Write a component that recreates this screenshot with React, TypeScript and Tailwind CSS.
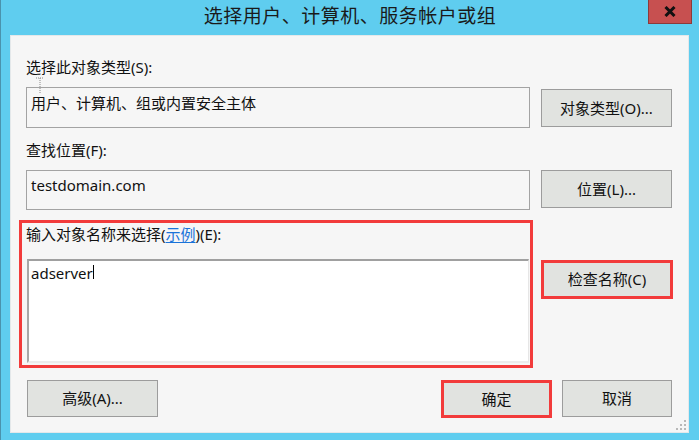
const font = "font-['Microsoft_YaHei_UI','Noto_Sans','Noto_Sans_CJK_SC',sans-serif]";

function Btn({
  label,
  w,
  h = "h-[38px]",
  red,
}: {
  label: string;
  w: string;
  h?: string;
  red?: boolean;
}) {
  return (
    <div
      className={`${w} ${h} shrink-0 flex items-center justify-center bg-[#e1e3e0] text-[15px] text-[#111] ${
        red ? "border-[3px] border-[#f23b3b]" : "border border-[#9c9c9c]"
      }`}
    >
      {label}
    </div>
  );
}

export default function App() {
  return (
    <div
      className={`${font} w-[699px] h-[440px] bg-[#5fcdef] border-l border-[#4a93ad] flex flex-col overflow-hidden relative`}
    >
      {/* title bar */}
      <div className="h-[35px] shrink-0 relative flex items-center justify-center">
        <span className="text-[19px] text-[#1a1a1a] tracking-[0.5px] -mt-[2px]">
          选择用户、计算机、服务帐户或组
        </span>
        <div className="absolute left-[647px] top-0 w-[44px] h-[24px] bg-[#c75050] border border-t-0 border-[#8d3a3a] flex items-center justify-center">
          <svg width="12" height="11" viewBox="0 0 12 11">
            <path d="M1.5 1 L10.5 10 M10.5 1 L1.5 10" stroke="#111" strokeWidth="3" />
          </svg>
        </div>
      </div>

      {/* client area */}
      <div className="relative ml-[9px] w-[679px] h-[398px] bg-[#f6f6f6] border border-[#e4e8ea] pt-[21px] pl-[15px]">
        <div className="h-[20px] leading-[20px] text-[15px] text-[#111]">选择此对象类型(S):</div>
        <div className="mt-[10px] flex items-start gap-[11px]">
          <div className="w-[504px] h-[41px] border border-[#a3a3a3] bg-[#f6f6f6] pl-[4px] pt-[5px] text-[15px] leading-[20px] text-[#111]">
            用户、计算机、组或内置安全主体
          </div>
          <div className="mt-[2px]">
            <Btn label="对象类型(O)..." w="w-[131px]" />
          </div>
        </div>

        <div className="mt-[12px] h-[20px] leading-[20px] text-[15px] text-[#111]">查找位置(F):</div>
        <div className="mt-[10px] flex items-start gap-[11px]">
          <div className="w-[504px] h-[40px] border border-[#a3a3a3] bg-[#f6f6f6] pl-[4px] pt-[4px] text-[15px] leading-[20px] text-[#111]">
            testdomain.com
          </div>
          <Btn label="位置(L)..." w="w-[131px]" />
        </div>

        <div className="mt-[10px] -ml-[7px] flex items-start gap-[8px]">
          <div className="w-[514px] h-[148px] border-[3px] border-[#f23b3b] pl-[4px] pt-[1px]">
            <div className="h-[20px] leading-[20px] text-[15px] text-[#111]">
              输入对象名称来选择(
              <span className="text-[#1a73d9] underline underline-offset-2">示例</span>
              )(E):
            </div>
            <div className="mt-[15px] ml-[1px] w-[502px] h-[104px] bg-white border-t-2 border-l-2 border-r border-b-2 border-t-[#a0a0a0] border-l-[#a8a8a8] border-r-[#e6e6e6] border-b-[#ececec] pl-[2px] pt-[2px] text-[15px] leading-[20px] text-[#111] flex items-start">
              <span>adserver</span>
              <span className="mt-[2px] w-px h-[14px] bg-black" />
            </div>
          </div>
          <div className="mt-[40px]">
            <Btn label="检查名称(C)" w="w-[132px]" h="h-[39px]" red />
          </div>
        </div>

        <div className="mt-[12px] flex items-start">
          <div className="ml-[1px]">
            <Btn label="高级(A)..." w="w-[131px]" h="h-[37px]" />
          </div>
          <div className="ml-[283px]">
            <Btn label="确定" w="w-[111px]" h="h-[38px]" red />
          </div>
          <div className="ml-[10px]">
            <Btn label="取消" w="w-[110px]" h="h-[37px]" />
          </div>
        </div>

        {/* I-beam mouse pointer */}
        <svg className="absolute left-[24px] top-[41px]" width="10" height="18" viewBox="0 0 10 18">
          <path d="M1 1 H9 M5 1 V17" stroke="#888" strokeWidth="1" strokeDasharray="1 1" />
        </svg>

        {/* resize grip */}
        <svg className="absolute right-[2px] bottom-[2px]" width="10" height="10" viewBox="0 0 10 10" fill="#b8b8b8">
          <rect x="8" y="0" width="2" height="2" />
          <rect x="4" y="4" width="2" height="2" />
          <rect x="8" y="4" width="2" height="2" />
          <rect x="0" y="8" width="2" height="2" />
          <rect x="4" y="8" width="2" height="2" />
          <rect x="8" y="8" width="2" height="2" />
        </svg>
      </div>
    </div>
  );
}
